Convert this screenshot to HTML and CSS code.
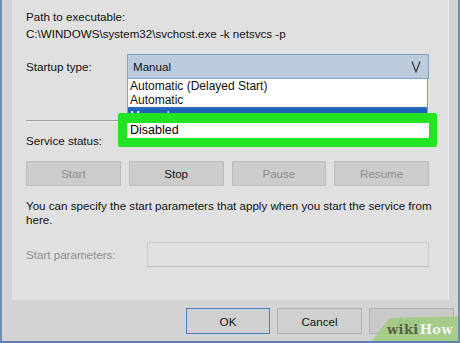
FILE: index.html
```html
<!DOCTYPE html>
<html>
<head>
<meta charset="utf-8">
<link rel="stylesheet" href="styles.css">
</head>
<body>
<div class="window">
  <div class="panel">
    <div class="line">Path to executable:</div>
    <div class="line">C:\WINDOWS\system32\svchost.exe -k netsvcs -p</div>
    <div class="startup-row">
      <div class="label">Startup type:</div>
      <div class="combo-wrap">
        <div class="combo">
          <span>Manual</span>
          <svg class="arrow" width="10" height="12" viewBox="0 0 10 12"><polyline points="1,0.5 5,11 9,0.5" fill="none" stroke="#2a2a2a" stroke-width="1.1"/></svg>
        </div>
        <ul class="dropdown">
          <li>Automatic (Delayed Start)</li>
          <li>Automatic</li>
          <li class="sel">Manual</li>
        </ul>
        <div class="highlight"><div class="hl-field">Disabled</div></div>
      </div>
    </div>
    <div class="sep"></div>
    <div class="status-row">Service status:</div>
    <div class="btn-row">
      <div class="btn disabled">Start</div>
      <div class="btn">Stop</div>
      <div class="btn disabled">Pause</div>
      <div class="btn disabled">Resume</div>
    </div>
    <p class="info">You can specify the start parameters that apply when you start the service from here.</p>
    <div class="param-row">
      <div class="plabel">Start parameters:</div>
      <div class="pinput"></div>
    </div>
  </div>
  <div class="footer">
    <div class="fbtn ok">OK</div>
    <div class="fbtn">Cancel</div>
    <div class="fbtn off">Apply</div>
  </div>
  <div class="wm"><span class="wiki">wiki</span><span class="how">How</span></div>
</div>
</body>
</html>
```
FILE: styles.css
```css
* { box-sizing: border-box; }
html, body { margin: 0; padding: 0; }
body {
  width: 460px;
  height: 343px;
  overflow: hidden;
  background: #d2d2d2;
  font-family: "Liberation Sans", Arial, sans-serif;
  font-size: 11.6px;
  color: #111;
}
.window {
  position: relative;
  width: 460px;
  height: 343px;
  border-left: 2px solid #6d8db5;
  border-right: 2px solid #6d8db5;
  border-bottom: 2px solid #5d82b0;
  background: #d3d3d3;
  display: flex;
  flex-direction: column;
  overflow: hidden;
}
.panel {
  margin-left: 10px;
  width: 437px;
  height: 300px;
  background: #e0e0e0;
  border-right: 1px solid #ebebeb;
  padding: 8px 19px 0 14px;
  flex: none;
}
.line { line-height: 17px; height: 17px; white-space: nowrap; }
.startup-row {
  margin-top: 12px;
  display: flex;
  align-items: center;
  height: 25px;
}
.label { width: 101px; flex: none; }
.combo-wrap { position: relative; flex: 1; height: 25px; }
.combo {
  height: 25px;
  background: #bccbdb;
  border: 1px solid #7f9fc2;
  display: flex;
  align-items: center;
  justify-content: space-between;
  padding: 0 7px 0 5px;
}
.arrow { display: block; }
.dropdown {
  position: absolute;
  left: 0;
  right: 1px;
  top: 25px;
  margin: 0;
  padding: 0;
  list-style: none;
  background: #fff;
  border-left: 1px solid #7f9fc2;
  border-right: 1px solid #7f9fc2;
  height: 42px;
  overflow: hidden;
  font-size: 12px;
}
.dropdown li { line-height: 14px; height: 14px; padding-left: 2px; white-space: nowrap; }
.dropdown li.sel { background: #1f62b8; color: #fff; border-top: 2px solid #2c6cc0; }
.highlight {
  position: absolute;
  left: -9px;
  top: 59px;
  width: 319px;
  height: 34px;
  background: #22e424;
  border-radius: 2px;
  padding: 10px 8px 9px 9px;
}
.hl-field {
  background: #fff;
  height: 15px;
  line-height: 15px;
  padding-left: 3px;
  color: #000;
  font-size: 12.5px;
}
.sep {
  margin-top: 41px;
  background: #9d9d9d;
  border-bottom: 1px solid #ededed;
  height: 2px;
}
.status-row { margin-top: 11px; line-height: 15px; height: 15px; }
.btn-row {
  margin-top: 13px;
  display: grid;
  grid-template-columns: repeat(4, 1fr);
  column-gap: 8px;
  height: 25px;
}
.btn {
  background: #cccccc;
  border: 1px solid #bcbcbc;
  display: flex;
  align-items: center;
  justify-content: center;
}
.btn.disabled { color: #8b8b8b; }
.info {
  margin: 13px 0 0 0;
  line-height: 14px;
  width: 408px;
}
.param-row {
  margin-top: 15px;
  display: flex;
  align-items: center;
  height: 25px;
}
.plabel { width: 121px; flex: none; color: #8e8e8e; }
.pinput {
  flex: 1;
  height: 25px;
  border: 1px solid #c9c9c9;
  border-bottom-color: #bdbdbd;
}
.footer {
  margin-top: 8px;
  display: flex;
  justify-content: flex-end;
  gap: 7px;
  padding-right: 4px;
}
.fbtn {
  width: 85px;
  height: 26px;
  background: #d0d0d0;
  border: 1px solid #b2b2b2;
  display: flex;
  align-items: center;
  justify-content: center;
}
.fbtn.ok { width: 84px; border: 1px solid #4a7fc8; }
.fbtn.off { background: #c9c9c9; color: #8a8a8a; }
.wm {
  position: absolute;
  left: 368px;
  bottom: -2px;
  width: 94px;
  height: 27px;
  background: rgba(160, 202, 125, 0.85);
  clip-path: polygon(20px 2px, 100% 0, 100% 100%, 0 100%);
  padding: 7px 0 0 17px;
  font-family: "DejaVu Serif", "Liberation Serif", serif;
  font-weight: bold;
  font-size: 13px;
  line-height: 14px;
  letter-spacing: 0.4px;
  white-space: nowrap;
}
.wiki { color: #50623f; }
.how { color: #f3f6ee; margin-left: 1px; }
```
